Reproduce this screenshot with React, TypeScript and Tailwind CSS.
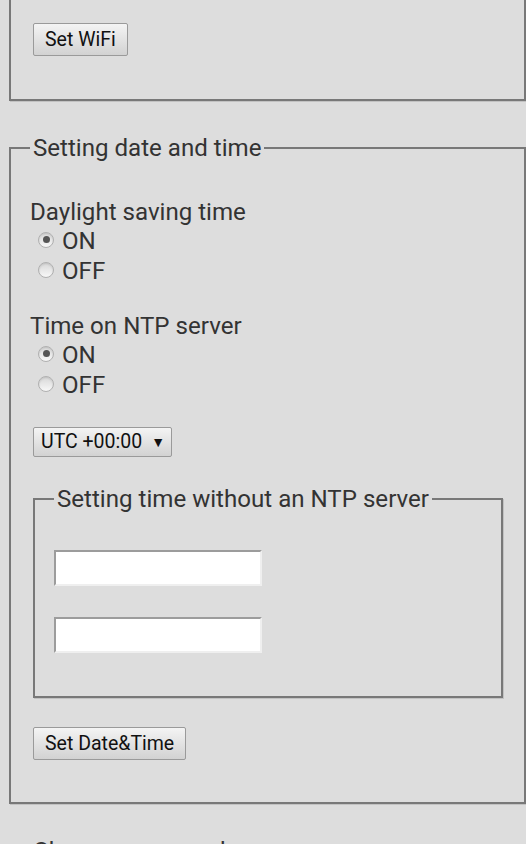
import { useState } from "react"

const frame = "border-2 border-[#787878] shadow-[1px_1px_0_#c2c2c2]"
const btn =
  "h-[33px] rounded-[2px] border border-[#9a9a9a] bg-gradient-to-b from-[#f4f4f4] to-[#d2d2d2] px-[11px] text-[19.5px] leading-none text-[#111]"
const inputStyles =
  "block h-[36px] w-[208px] border-2 border-t-[#9c9c9c] border-l-[#9c9c9c] border-b-[#efefef] border-r-[#efefef] bg-white outline-none"

const Radio = ({ checked, label, onClick }: { checked: boolean; label: string; onClick: () => void }) => (
  <div className="flex h-[30px] cursor-pointer items-center" onClick={onClick}>
    <span className="ml-[8px] -mt-[3px] flex h-[16px] w-[16px] items-center justify-center rounded-full border border-[#b0b0b0] bg-gradient-to-b from-[#d8d8d8] to-[#f8f8f8] shadow-[inset_0_1px_2px_rgba(0,0,0,0.12)]">
      {checked && <span className="h-[7px] w-[7px] rounded-full bg-[#555]" />}
    </span>
    <span className="ml-[8px]">{label}</span>
  </div>
)

export default function App() {
  const [dst, setDst] = useState(true)
  const [ntp, setNtp] = useState(true)

  return (
    <div className="h-[844px] overflow-hidden bg-[#dddddd] font-['Roboto',sans-serif] text-[24.1px] leading-[28px] text-[#333]">
      <fieldset className={`${frame} ml-[9px] border-t-0 pt-[23px] pb-[43px] pl-[19px]`}>
        <button type="button" className={`${btn} ml-[3px]`}>
          Set WiFi
        </button>
      </fieldset>

      <fieldset className={`${frame} ml-[9px] mt-[33px] pl-[19px] pr-[21px] pb-[42px]`}>
        <legend className="px-[3px]">Setting date and time</legend>

        <div className="mt-[36px]">Daylight saving time</div>
        <Radio checked={dst} label="ON" onClick={() => setDst(true)} />
        <Radio checked={!dst} label="OFF" onClick={() => setDst(false)} />

        <div className="mt-[26px]">Time on NTP server</div>
        <Radio checked={ntp} label="ON" onClick={() => setNtp(true)} />
        <Radio checked={!ntp} label="OFF" onClick={() => setNtp(false)} />

        <div className="mt-[27px] ml-[3px] flex h-[30px] w-[139px] items-center rounded-[2px] border border-[#9a9a9a] bg-gradient-to-b from-[#f4f4f4] to-[#d2d2d2] pl-[7px] text-[19.5px] leading-none text-[#111]">
          <span>UTC +00:00</span>
          <span className="ml-[9px] text-[14px]">▼</span>
        </div>

        <fieldset className={`${frame} ml-[3px] mt-[28px] pl-[19px] pb-[43px]`}>
          <legend className="px-[3px]">Setting time without an NTP server</legend>
          <input className={`${inputStyles} mt-[37px]`} />
          <input className={`${inputStyles} mt-[31px]`} />
        </fieldset>

        <button type="button" className={`${btn} ml-[3px] mt-[29px]`}>
          Set Date&amp;Time
        </button>
      </fieldset>

      <div className="ml-[33px] mt-[33px]">Change password</div>
    </div>
  )
}
